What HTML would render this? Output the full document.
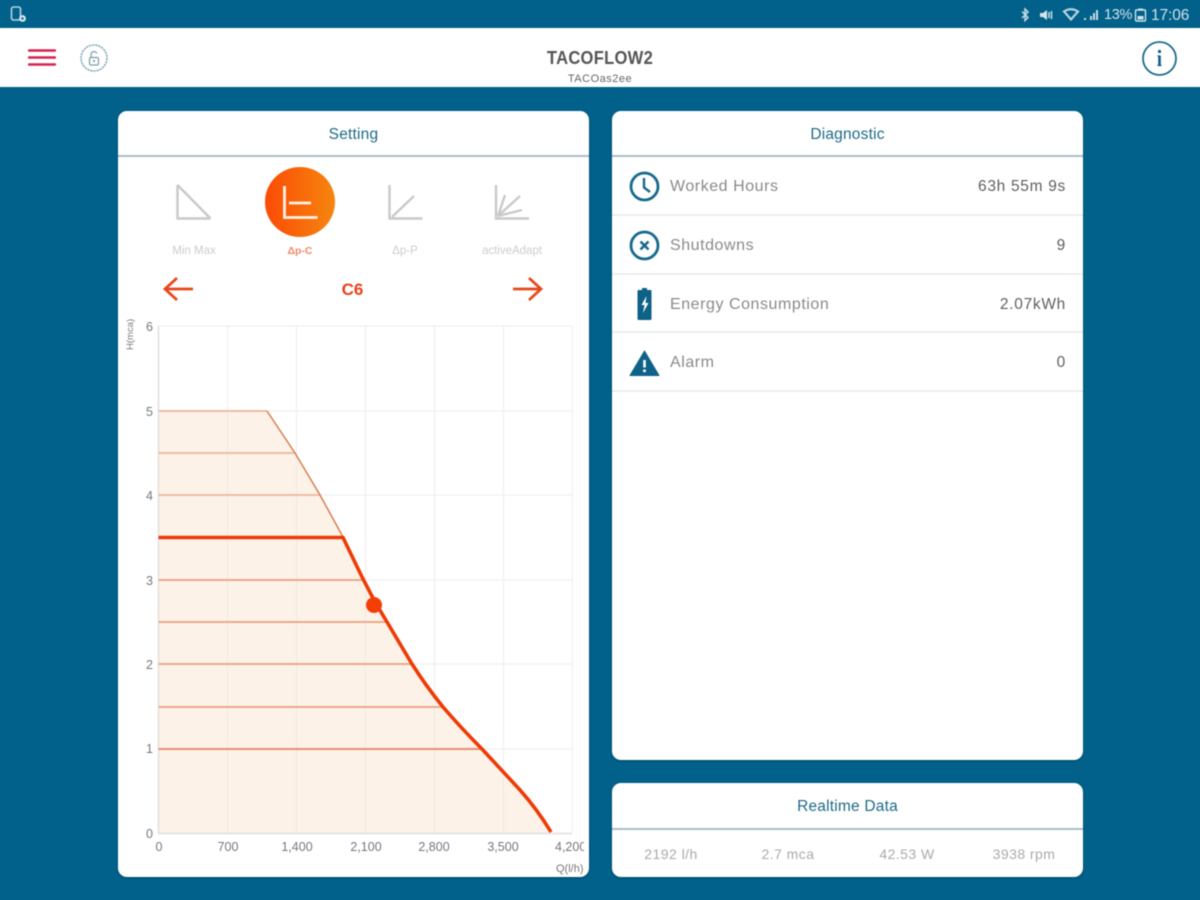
<!DOCTYPE html>
<html><head><meta charset="utf-8">
<style>
html,body{margin:0;padding:0;width:1200px;height:900px;overflow:hidden;background:#01618a}
body{font-family:"Liberation Sans",sans-serif;position:relative}
#w{position:absolute;left:0;top:0;width:1200px;height:900px;filter:blur(.6px)}
.a{position:absolute;white-space:nowrap}
.card{position:absolute;background:#fff;border-radius:9px;box-shadow:0 1px 2px rgba(0,40,60,.4)}
.t{position:absolute;left:0;right:0;text-align:center;color:#1d6a88;font-size:15.5px;line-height:18px;letter-spacing:.2px}
.hl{position:absolute;left:0;right:0;height:2px;background:#a9bfc9}
.lab{position:absolute;font-size:16px;line-height:18px;color:#8a8a8a;left:58px;letter-spacing:.55px}
.val{position:absolute;font-size:15.5px;line-height:18px;color:#5f5f5f;right:17px;letter-spacing:.7px}
.div{position:absolute;left:0;right:0;height:2px;background:#eceeee}
.rt{position:absolute;top:62px;font-size:14px;line-height:18px;color:#aaa;letter-spacing:.45px;transform:translateX(-50%);white-space:nowrap}
.m{position:absolute;top:133px;font-size:11.5px;line-height:14px;color:#cdcdcd;transform:translateX(-50%);white-space:nowrap}
</style></head><body><div id="w">

<!-- status bar -->
<svg class="a" style="left:10px;top:6px" width="18" height="18" viewBox="0 0 18 18"><rect x="1.500" y="1" width="9" height="13" rx="2" fill="none" stroke="#b8d2df" stroke-width="1.600"/><circle cx="12.500" cy="12.500" r="3.400" fill="#d7e6ee"/><circle cx="12.500" cy="12.500" r="1.200" fill="#01618a"/></svg>
<svg class="a" style="left:1020px;top:7px" width="84" height="16" viewBox="0 0 84 16">
<path d="M2 4.500l6 6-3 3V2l3 3-6 6" fill="none" stroke="#c7dbe5" stroke-width="1.500"/>
<path d="M20 6h3l4-3v10l-4-3h-3z" fill="#d7e6ee"/><path d="M29 5v6M31.500 4v8" stroke="#d7e6ee" stroke-width="1.400"/>
<path d="M44 4.500q7-4.500 14 0l-7 8z" fill="none" stroke="#b8d2df" stroke-width="2.200"/>
<rect x="64" y="11" width="2" height="2" fill="#c7dbe5"/><rect x="70" y="9" width="2" height="4" fill="#c7dbe5"/><rect x="73" y="6" width="2" height="7" fill="#c7dbe5"/><rect x="76" y="3" width="2" height="10" fill="#c7dbe5"/>
</svg>
<div class="a" style="left:1104px;top:7px;font-size:14.500px;line-height:17px;color:#d0e1ea;letter-spacing:-.3px">13%</div>
<svg class="a" style="left:1134px;top:8px" width="13" height="14" viewBox="0 0 13 14"><rect x="1.500" y="2" width="10" height="11" rx="1" fill="none" stroke="#d0e1ea" stroke-width="1.400"/><rect x="4" y="0.500" width="5" height="2" fill="#d0e1ea"/><rect x="3.500" y="8" width="6" height="3.500" fill="#d0e1ea"/></svg>
<div class="a" style="left:1151px;top:7px;font-size:15.500px;line-height:17px;color:#d0e1ea;letter-spacing:-.1px">17:06</div>

<!-- app bar -->
<div class="a" style="left:-6px;top:28px;width:1212px;height:59px;background:#fff"></div>
<svg class="a" style="left:28px;top:48px" width="28" height="20" viewBox="0 0 28 20"><path d="M1 2.500h26M1 9.500h26M1 16.500h26" stroke="#d4234f" stroke-width="2.400" stroke-linecap="round"/></svg>
<svg class="a" style="left:79px;top:43px" width="30" height="30" viewBox="0 0 30 30"><circle cx="15" cy="15" r="13" fill="none" stroke="#8fb0bd" stroke-width="1.600" stroke-dasharray="2.400 .7"/><rect x="10.500" y="14.500" width="9" height="7.500" rx="1.500" fill="none" stroke="#7b9dab" stroke-width="1.200"/><path d="M12 14.500v-3a3 3 0 0 1 5.800-1" fill="none" stroke="#7b9dab" stroke-width="1.200"/><circle cx="15" cy="18" r="1.100" fill="#7b9dab"/></svg>
<div class="a" style="left:0;width:1200px;top:47px;text-align:center;font-size:18px;line-height:22px;font-weight:bold;color:#555;letter-spacing:.3px;transform:scaleX(.92)">TACOFLOW2</div>
<div class="a" style="left:0;width:1200px;top:72px;text-align:center;font-size:11px;line-height:14px;color:#666;letter-spacing:.5px">TACOas2ee</div>
<svg class="a" style="left:1141px;top:40px" width="37" height="37" viewBox="0 0 37 37"><circle cx="18.500" cy="18.500" r="16.500" fill="none" stroke="#1a6c8d" stroke-width="1.800"/><path d="M18.500 16v9" stroke="#0d5f84" stroke-width="2.600"/><circle cx="18.500" cy="11.500" r="1.600" fill="#0d5f84"/><path d="M16.500 16h3M16.500 25.500h4" stroke="#0d5f84" stroke-width="1.200"/></svg>

<!-- setting card -->
<div class="card" style="left:118px;top:111px;width:471px;height:766px">
  <div class="t" style="top:15px">Setting</div>
  <div class="hl" style="top:44px"></div>
  <div class="m" style="left:76px">Min Max</div>
  <div class="m" style="left:182px;color:#ef8a68;font-weight:bold;font-size:10.500px">Δp-C</div>
  <div class="m" style="left:287px">Δp-P</div>
  <div class="m" style="left:394px">activeAdapt</div>
  <div class="a" style="left:0;width:471px;top:169px;text-align:center;font-size:17px;line-height:20px;font-weight:bold;color:#e8421a;transform:translateX(-1px)">C6</div>
</div>

<!-- mode icons + chart overlay -->
<svg class="a" style="left:118px;top:111px" width="471" height="766" viewBox="118 111 471 766">
  <defs><linearGradient id="g" x1="0" y1="0" x2="1" y2="0"><stop offset="0" stop-color="#fb4b05"/><stop offset="1" stop-color="#f6860f"/></linearGradient></defs>
  <path d="M177.500 185v33.500h33M177.500 185l33 33.500" fill="none" stroke="#c9c9c9" stroke-width="2.400"/>
  <circle cx="300" cy="202" r="35" fill="url(#g)"/>
  <path d="M284.500 186v31.500h33M289 203h22" fill="none" stroke="#fff1e4" stroke-width="2.800"/>
  <path d="M389.500 185v33.500h33M392 217l22-21" fill="none" stroke="#c9c9c9" stroke-width="2.400"/>
  <path d="M496 185v33.500h33M498 216l7-21M498 216l22-20M498 216l24-6" fill="none" stroke="#c9c9c9" stroke-width="2.400"/>
  <path d="M193 289h-28M177 278l-12 11 12 11" fill="none" stroke="#e8481c" stroke-width="2.800"/>
  <path d="M513 289h28M529 278l12 11-12 11" fill="none" stroke="#e8481c" stroke-width="2.800"/>

  <g stroke="#f0f0f0" stroke-width="1.200" fill="none">
    <path d="M227.500 326v507M296.500 326v507M365.500 326v507M434.500 326v507M503.500 326v507M572.500 326v507"/>
    <path d="M158 326h414M158 411h414M158 495h414M158 580h414M158 664h414M158 749h414"/>
  </g>
  <path d="M158.500 411H267L295 453 320 495 343 537 362 580 375 603 387 622 412 664Q426 686 443 707 462 729 482 749L520 790Q537 809 552 833H158.500Z" fill="#fdf2e7"/>
  <g stroke="#eeeae4" stroke-width="1.200" fill="none"><path d="M227.500 411v422M296.500 455v378M365.500 590v243M434.500 700v133M503.500 775v58"/></g>
  <path d="M158.500 326v507M158 833.500h414" stroke="#dedede" stroke-width="1.400" fill="none"/>
  <g stroke="#eebda5" stroke-width="2" fill="none">
    <path d="M158.500 411H267M158.500 453H295M158.500 495H320"/>
  </g>
  <g stroke="#eba98c" stroke-width="2" fill="none">
    <path d="M158.500 580H362M158.500 622H387M158.500 664H412M158.500 707H443"/>
  </g>
  <path d="M158.500 749H482" stroke="#e58f72" stroke-width="2" fill="none"/>
  <path d="M267 411L295 453 320 495 343 537" stroke="#d67f55" stroke-width="1.500" fill="none"/>
  <path d="M158.500 537.500H343L362 577 375 602 387 622 412 664Q426 686 443 707 462 729 482 749L520 790Q537 809 551 832" stroke="#ee3a06" stroke-width="3.600" fill="none"/>
  <circle cx="374" cy="605" r="8" fill="#f53e05"/>

  <g font-family="Liberation Sans,sans-serif" font-size="12.500" fill="#777">
    <text x="153" y="331" text-anchor="end">6</text><text x="153" y="416" text-anchor="end">5</text><text x="153" y="500" text-anchor="end">4</text><text x="153" y="585" text-anchor="end">3</text><text x="153" y="669" text-anchor="end">2</text><text x="153" y="753" text-anchor="end">1</text><text x="153" y="838" text-anchor="end">0</text>
    <text x="159" y="851" text-anchor="middle">0</text><text x="228" y="851" text-anchor="middle">700</text><text x="297" y="851" text-anchor="middle">1,400</text><text x="366" y="851" text-anchor="middle">2,100</text><text x="434" y="851" text-anchor="middle">2,800</text><text x="503" y="851" text-anchor="middle">3,500</text>
    <text x="555" y="851">4,200</text>
    <text x="556" y="872" font-size="11">Q(l/h)</text>
    <text transform="translate(133 350) rotate(-90)" font-size="9.500">H(mca)</text>
  </g>
</svg>
<div class="a" style="left:584px;top:835px;width:5px;height:30px;background:#fff"></div>

<!-- diagnostic card -->
<div class="card" style="left:612px;top:111px;width:471px;height:649px">
  <div class="t" style="top:15px">Diagnostic</div>
  <div class="hl" style="top:44px"></div>
  <div class="lab" style="top:67px">Worked Hours</div><div class="val" style="top:67px">63h 55m 9s</div>
  <div class="div" style="top:103px"></div>
  <div class="lab" style="top:126px">Shutdowns</div><div class="val" style="top:126px">9</div>
  <div class="div" style="top:162px"></div>
  <div class="lab" style="top:185px">Energy Consumption</div><div class="val" style="top:185px">2.07kWh</div>
  <div class="div" style="top:220px"></div>
  <div class="lab" style="top:243px">Alarm</div><div class="val" style="top:243px">0</div>
  <div class="div" style="top:279px"></div>
  <svg class="a" style="left:0;top:0" width="60" height="290" viewBox="612 111 60 290">
    <circle cx="644.500" cy="186.500" r="13.500" fill="none" stroke="#176a8c" stroke-width="2.800"/>
    <path d="M644 178v9.500l6 4.500" fill="none" stroke="#176a8c" stroke-width="2.400"/>
    <circle cx="644.500" cy="245.500" r="13.500" fill="none" stroke="#176a8c" stroke-width="2.800"/>
    <path d="M640.500 241.500l8 8M648.500 241.500l-8 8" fill="none" stroke="#176a8c" stroke-width="2.600"/>
    <path d="M642 288h5v2h3.500a1 1 0 0 1 1 1v28a1 1 0 0 1-1 1h-12a1 1 0 0 1-1-1v-28a1 1 0 0 1 1-1H642z" fill="#0e6288"/>
    <path d="M646.500 296l-5 9h3l-1.500 8 5.500-10h-3z" fill="#fff"/>
    <path d="M644.500 351l14.500 24.500h-29z" fill="#0e6288" stroke="#0e6288" stroke-width="1" stroke-linejoin="round"/>
    <rect x="643.200" y="360" width="2.600" height="7.500" fill="#fff"/><rect x="643.200" y="369.500" width="2.600" height="2.600" fill="#fff"/>
  </svg>
</div>

<!-- realtime card -->
<div class="card" style="left:612px;top:783px;width:471px;height:94px">
  <div class="t" style="top:15px">Realtime Data</div>
  <div class="hl" style="top:45px"></div>
  <div class="rt" style="left:59px">2192 l/h</div>
  <div class="rt" style="left:176px">2.7 mca</div>
  <div class="rt" style="left:295px">42.53 W</div>
  <div class="rt" style="left:412px">3938 rpm</div>
</div>

</div></body></html>
